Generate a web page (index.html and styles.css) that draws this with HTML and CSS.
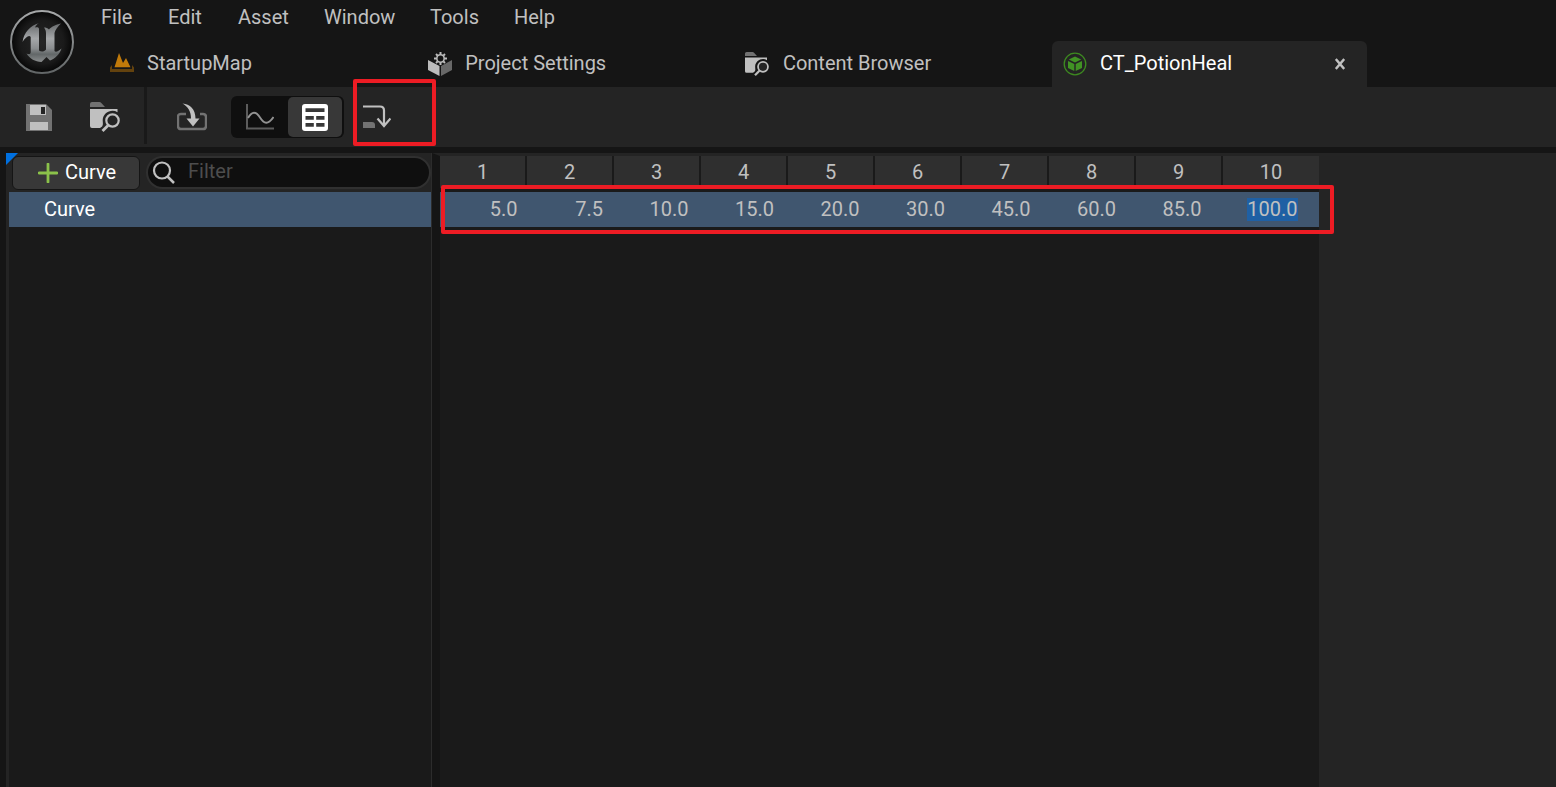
FILE: index.html
```html
<!DOCTYPE html>
<html lang="en">
<head>
<meta charset="utf-8">
<title>CT_PotionHeal</title>
<link rel="stylesheet" href="styles.css">
</head>
<body>
<div class="app">
  <header class="titlebar">
    <div class="logo">
      <svg width="66" height="66" viewBox="0 0 66 66">
        <defs>
          <linearGradient id="ring" x1="0" y1="0" x2="0" y2="1"><stop offset="0" stop-color="#a6a8a9"/><stop offset="1" stop-color="#626667"/></linearGradient>
          <linearGradient id="steel" x1="0" y1="0" x2="0" y2="1"><stop offset="0" stop-color="#66696b"/><stop offset=".4" stop-color="#a5a7a9"/><stop offset=".65" stop-color="#8b8e90"/><stop offset=".8" stop-color="#626768"/><stop offset="1" stop-color="#8a8d8e"/></linearGradient>
          <radialGradient id="disc"><stop offset="0" stop-color="#262626"/><stop offset=".7" stop-color="#1a1a1a"/><stop offset="1" stop-color="#060606"/></radialGradient>
        </defs>
        <circle cx="33" cy="33" r="31" fill="url(#disc)" stroke="url(#ring)" stroke-width="2"/>
        <path fill="url(#steel)" d="M30 14C21 17 15 23 13.500 33C16.500 28.500 20 25.500 21.700 28V43C21.700 45.500 19.500 45.500 17.500 44.500C21 50 26 52.500 32.500 53L37.500 48L41 51.500C46 49.500 50.500 45.500 52.500 39.500C49.500 42.500 46.500 43.500 45.500 42V24C46 21 49 17.500 52 14.500C46.500 15.500 42 18 40 20.500C38.500 19 37 18.500 35 18.500C36.500 20.500 37 22 37 24.500V40.500C35 43 32 43 30 41.500V20C30 18 28 18 26 18.500C27 16.500 28 15 30 14Z"/>
      </svg>
    </div>
    <div class="rows">
      <nav class="menu">
        <span class="m-file">File</span><span class="m-edit">Edit</span><span class="m-asset">Asset</span><span class="m-window">Window</span><span class="m-tools">Tools</span><span>Help</span>
      </nav>
      <div class="tabs">
        <div class="tab">
          <svg width="24" height="24" viewBox="0 0 24 24"><path fill="#63420e" d="M0 15.500 2 13v4h20v-4l2 2.500V20H0Z"/><path fill="#191919" d="M2 15.500h20v1.200H2z"/><path fill="#c17a0a" d="M4.500 15.300 9 1l4 10 3-5 4.500 9.300Z"/></svg>
          <span>StartupMap</span>
        </div>
        <div class="tab">
          <svg width="24" height="24" viewBox="0 0 24 24"><path fill="#bcbcbc" d="M0 8v10l11.500 6V14Z"/><path fill="#686868" d="M24 8v10l-11 6V14Z"/><circle cx="12.500" cy="6.500" r="5" fill="#151515"/><circle cx="12.500" cy="6.500" r="3.700" fill="none" stroke="#bcbcbc" stroke-width="1.600"/><path stroke="#bcbcbc" stroke-width="2" d="M12.500 0v2.500M12.500 10.500V13M6 6.500h2.500M16.500 6.500H19M8 2l1.600 1.600M15.400 9.400 17 11M17 2l-1.600 1.600M8 11l1.600-1.600"/></svg>
          <span>Project Settings</span>
        </div>
        <div class="tab">
          <svg width="24" height="24" viewBox="0 0 30 30"><use href="#folder"/></svg>
          <span>Content Browser</span>
        </div>
        <div class="tab active">
          <svg width="24" height="24" viewBox="0 0 24 24"><circle cx="12" cy="12" r="10.800" fill="none" stroke="#3d8a20" stroke-width="1.300"/><path fill="#419324" d="M12 4.500 18.200 7.500 12 10.500 5.800 7.500ZM5 8.900 11.300 12v7L5 15.900ZM19 8.900 12.700 12v7L19 15.900Z"/></svg>
          <span>CT_PotionHeal</span>
          <svg class="close" width="10" height="12" viewBox="0 0 10 12"><path d="M.8 1 9.200 11M9.200 1 .8 11" stroke="#c0c0c0" stroke-width="2.400"/></svg>
        </div>
      </div>
    </div>
  </header>

  <div class="toolbar">
    <svg class="save" width="26" height="27" viewBox="0 0 26 27"><path fill="#727272" d="M0 0h20l6 6v21H0Z"/><path fill="#c0c0c0" d="M4 1h16v10H4zM4 18h18v8H4z"/><path fill="#242424" d="M15 3h4v7h-4z"/></svg>
    <svg class="browse" width="30" height="30" viewBox="0 0 30 30">
      <g id="folder"><path fill="#727272" d="M0 2Q0 0 2 0h7.500q1 0 1.800 1L15 5H0Z"/><path fill="#c0c0c0" d="M0 7h27.500v3.200C21 6.500 13 11 12.700 18c0 3 .8 4.500-.6 6.500L10 26H2q-2 0-2-2Z"/><circle cx="22.500" cy="18.500" r="6.200" fill="#242424" stroke="#c0c0c0" stroke-width="2.200"/><path d="M18 23.500 12.500 29" stroke="#c0c0c0" stroke-width="2.800"/></g>
    </svg>
    <span class="rule"></span>
    <svg class="import" width="30" height="28" viewBox="0 0 30 28"><path d="M9 11H4q-3 0-3 3v9q0 3 3 3h22q3 0 3-3v-9q0-3-3-3h-3" fill="none" stroke="#727272" stroke-width="2.400"/><path fill="#c0c0c0" d="M5.500.5C13 1 18.500 6 18.500 15.500H22.500L16 23.500 9.500 15.500H14C14 8 11 4 5.500.5Z"/></svg>
    <div class="toggle">
      <div class="opt"><svg width="28" height="26" viewBox="0 0 28 26"><path d="M1 0v24.500h27" fill="none" stroke="#5c5c5c" stroke-width="2"/><path d="M2 14C6 7 10 7 14 13.500S22 21 27.500 13" fill="none" stroke="#929292" stroke-width="1.900"/></svg></div>
      <div class="opt on"><svg width="26" height="27" viewBox="0 0 26 27"><rect width="26" height="27" rx="3" fill="#fff"/><path fill="#383838" d="M3.500 4.300h19V8h-19zM3.500 12h8.300v3.700H3.500zM14.200 12h8.300v3.700h-8.300zM3.500 19h8.300v3.700H3.500zM14.200 19h8.300v3.700h-8.300z"/></svg></div>
    </div>
    <div class="step">
      <svg width="28" height="24" viewBox="0 0 28 24"><path fill="#727272" d="M0 17h9q3 0 3 3v3H0z"/><path d="M0 1.500h17q4 0 4 4V21M14.500 13.500 21 21l6.500-7.500" fill="none" stroke="#c0c0c0" stroke-width="2.200"/></svg>
    </div>
  </div>

  <main class="editor">
    <section class="curves">
      <div class="controls">
        <div class="add"><svg width="20" height="20" viewBox="0 0 20 20"><path d="M10 1v18M1 10h18" stroke="#8bc24a" stroke-width="2.800" stroke-linecap="round"/></svg><span>Curve</span></div>
        <div class="filter"><svg width="24" height="24" viewBox="0 0 24 24"><circle cx="10" cy="9.500" r="8" fill="none" stroke="#c0c0c0" stroke-width="2.200"/><path d="m15.500 15.500 6.500 6.500" stroke="#c0c0c0" stroke-width="2.500"/></svg><span>Filter</span></div>
      </div>
      <div class="list"><div class="curve-row">Curve</div></div>
      <svg class="corner" width="12" height="12"><path d="M0 0h12L0 12Z" fill="#0070e0"/></svg>
    </section>
    <section class="table">
      <div class="head"><span>1</span><span>2</span><span>3</span><span>4</span><span>5</span><span>6</span><span>7</span><span>8</span><span>9</span><span>10</span></div>
      <div class="values"><span>5.0</span><span>7.5</span><span>10.0</span><span>15.0</span><span>20.0</span><span>30.0</span><span>45.0</span><span>60.0</span><span>85.0</span><span><mark>100.0</mark></span></div>
      <div class="highlight"></div>
    </section>
    <div class="empty"></div>
  </main>
</div>
</body>
</html>
```
FILE: styles.css
```css
* { box-sizing: border-box; }
body { margin: 0; background: #151515; color: #c0c0c0; font: 20px/24px Roboto, "Liberation Sans", sans-serif; }
svg { display: block; flex: none; }
.app { display: flex; flex-direction: column; width: 1556px; height: 787px; overflow: hidden; }
.titlebar { display: flex; height: 87px; flex: none; }
.logo { width: 101px; padding: 8.500px 0 0 8.500px; }
.menu { display: flex; height: 41px; padding-top: 5px; }
.menu span { white-space: nowrap; flex: none; }
.m-file { width: 67px; }
.m-edit { width: 70px; }
.m-asset { width: 86px; }
.m-window { width: 106px; }
.m-tools { width: 84px; }
.tabs { display: flex; gap: 2.700px; margin-left: -2px; }
.tab { display: flex; align-items: center; width: 315px; height: 46px; padding: 0 22px 0 11px; gap: 13px; white-space: nowrap; }
.tab + .tab { gap: 13.500px; }
.tab span { position: relative; top: -1px; }
.tab.active { background: #242424; color: #fff; border-radius: 6px 6px 0 0; margin-left: -.5px; }
.close { margin-left: auto; }

.toolbar { display: flex; align-items: center; height: 60px; flex: none; padding-left: 26px; background: #242424; }
.browse { margin-left: 38px; }
.rule { width: 3px; height: 57px; margin-left: 24px; background: #191919; align-self: flex-start; }
.import { margin-left: 30px; }
.toggle { display: flex; width: 113px; height: 42px; margin-left: 24px; padding: 1px; border-radius: 6px; background: #0f0f0f; }
.opt { display: flex; align-items: center; justify-content: center; width: 56px; border-radius: 5px; }
.opt.on { width: 54px; background: #383838; }
.step { display: flex; align-items: center; width: 83px; height: 67px; margin: -10px 0 0 9px; padding: 10px 0 0 6px; border: 4px solid #ed1c24; border-radius: 2px; }

.editor { display: flex; flex: 1; padding: 6px 0 0 6px; }
.curves { position: relative; display: flex; flex-direction: column; width: 426px; padding-left: 3px; background: #242424; border-right: 1px solid #2c2c2c; }
.corner { position: absolute; left: 0; top: 0; }
.controls { display: flex; height: 39px; gap: 6px; padding: 3px 0 0 3px; }
.add { display: flex; align-items: center; gap: 7px; width: 128px; height: 34px; padding-left: 25px; border: 1px solid #151515; border-radius: 6px; background: #383838; color: #fff; }
.add span { position: relative; top: -1px; }
.filter { display: flex; align-items: center; gap: 12px; width: 285px; height: 33px; padding: 0 4px; border: 2px solid #303030; border-radius: 17px; background: #0f0f0f; color: #4d4d4d; }
.filter span { position: relative; top: -2px; }
.list { flex: 1; background: #1a1a1a; }
.curve-row { height: 35px; padding: 5px 0 0 35px; line-height: 24px; background: #40566f; color: #fff; }

.table { position: relative; width: 887px; border-left: 8px solid #151515; border-top: 3px solid #242424; background: #1a1a1a; }
.head { display: grid; grid-template-columns: repeat(9, 85px) 96px; gap: 2px; height: 32px; }
.head span { background: #2f2f2f; text-align: center; line-height: 32px; }
.values { display: grid; grid-template-columns: 77.500px repeat(8, 85.500px) 96px; height: 35px; margin-top: 4px; background: #40566f; }
.values span { text-align: right; line-height: 35px; }
.values mark { display: inline-block; background: #1f60a4; color: inherit; line-height: 23px; }
.highlight { position: absolute; left: 1px; top: 29px; width: 893px; height: 49px; border: 4px solid #ed1c24; border-radius: 2px; z-index: 1; }
.empty { flex: 1; background: #242424; }
```
